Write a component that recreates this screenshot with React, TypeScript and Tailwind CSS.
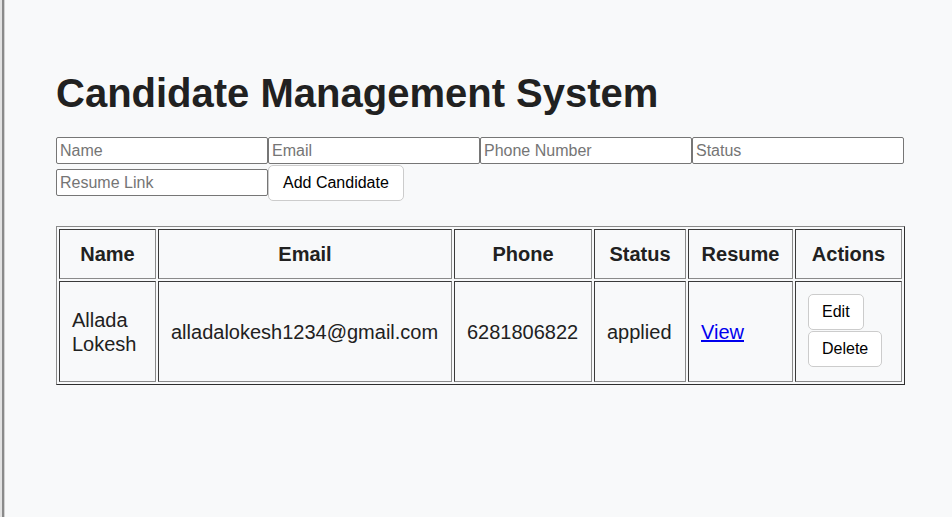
import React from "react";

const font = { fontFamily: '"Liberation Sans", Arial, sans-serif' };

const candidates = [
  {
    name: "Allada Lokesh",
    email: "alladalokesh1234@gmail.com",
    phone: "6281806822",
    status: "applied",
    resume: "#",
  },
];

const fields = ["Name", "Email", "Phone Number", "Status", "Resume Link"];

const thCls =
  "px-3 py-3 text-[20px] leading-6 font-bold text-center border border-t-[#3a3a3a] border-l-[#3a3a3a] border-r-[#8a8a8a] border-b-[#8a8a8a]";
const tdCls =
  "px-3 py-3 text-[20px] leading-6 text-left align-middle border border-t-[#3a3a3a] border-l-[#3a3a3a] border-r-[#8a8a8a] border-b-[#8a8a8a]";

export default function App() {
  return (
    <div className="flex min-h-screen bg-[#f8f9fa] text-[#212121]" style={font}>
      <div className="w-[2px] bg-[#e2e2e2]" />
      <div className="w-[2px] bg-[#8a8a8a]" />
      <div className="w-px bg-[#d2d2d2]" />
      <main className="flex flex-col pl-[51px] pt-[70px]">
        <h1 className="text-[40px] leading-[46px] font-bold">Candidate Management System</h1>

        <div className="mt-[21px] flex w-[848px] flex-wrap items-center">
          {fields.map((f) => (
            <input
              key={f}
              placeholder={f}
              className="h-[27px] w-[212px] rounded-[2px] border border-[#767676] bg-white px-[3px] text-[16px] text-black outline-none placeholder:text-[#757575]"
            />
          ))}
          <button className="mt-px h-[36px] rounded-[5px] border border-[#cccccc] bg-white px-[14px] text-[16px] text-black">
            Add Candidate
          </button>
        </div>

        <table className="mt-[25px] w-[849px] table-fixed border-separate border-spacing-[2px] border border-t-[#8a8a8a] border-l-[#8a8a8a] border-r-[#2e2e2e] border-b-[#2e2e2e]">
          <thead>
            <tr>
              <th className={`${thCls} w-[97px]`}>Name</th>
              <th className={`${thCls} w-[294px]`}>Email</th>
              <th className={`${thCls} w-[138px]`}>Phone</th>
              <th className={`${thCls} w-[92px]`}>Status</th>
              <th className={`${thCls} w-[105px]`}>Resume</th>
              <th className={`${thCls} w-[107px]`}>Actions</th>
            </tr>
          </thead>
          <tbody>
            {candidates.map((c) => (
              <tr key={c.email}>
                <td className={tdCls}>{c.name}</td>
                <td className={tdCls}>{c.email}</td>
                <td className={tdCls}>{c.phone}</td>
                <td className={tdCls}>{c.status}</td>
                <td className={tdCls}>
                  <a href={c.resume} className="text-[#0000ee] underline">
                    View
                  </a>
                </td>
                <td className={`${tdCls} !pb-[14px]`}>
                  <div className="flex flex-col items-start gap-px">
                    <button className="h-[36px] rounded-[5px] border border-[#cccccc] bg-white px-[13px] text-[16px] text-black">
                      Edit
                    </button>
                    <button className="h-[36px] rounded-[5px] border border-[#cccccc] bg-white px-[13px] text-[16px] text-black">
                      Delete
                    </button>
                  </div>
                </td>
              </tr>
            ))}
          </tbody>
        </table>
      </main>
    </div>
  );
}
